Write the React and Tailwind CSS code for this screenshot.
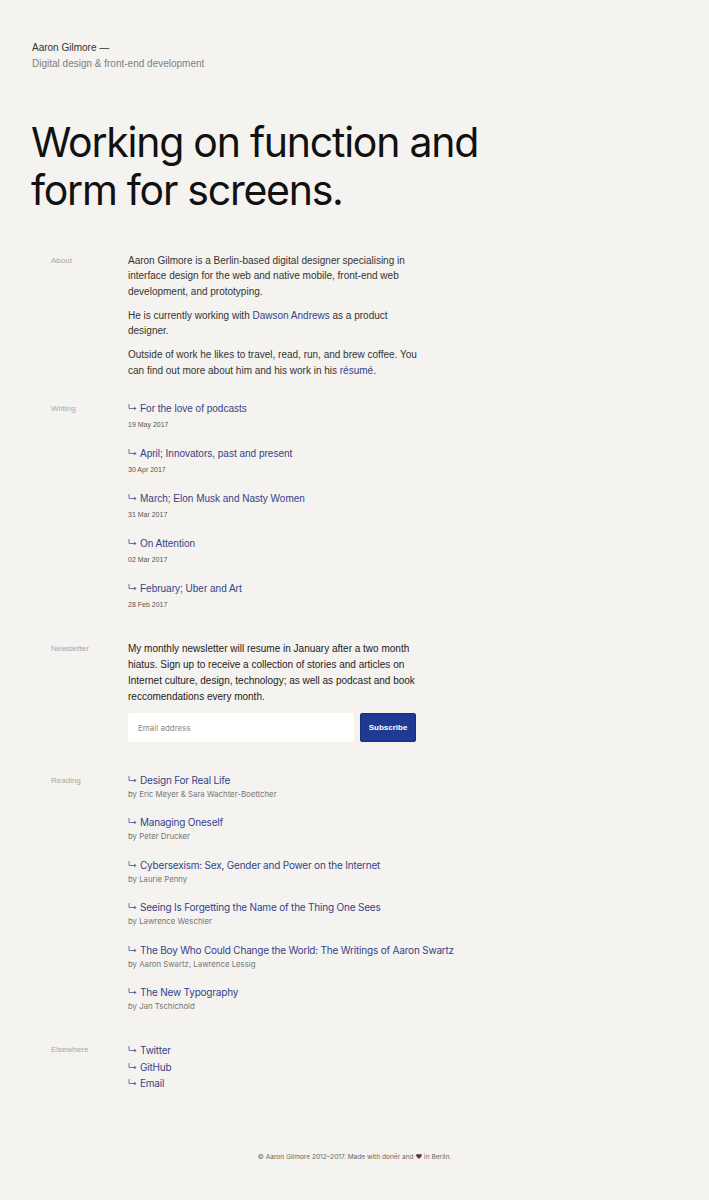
import React from "react";

const helv = { fontFamily: '"Liberation Sans", Arial, sans-serif' };
const inter = { fontFamily: 'Inter, "Liberation Sans", sans-serif' };

function Arrow() {
  return (
    <svg width="9" height="7" viewBox="0 0 9 7" className="inline-block mr-[3px] align-[1px] text-[#5a65a0]" fill="none">
      <path d="M1 0 V4.5 H7" stroke="currentColor" strokeWidth="0.9" />
      <path d="M6 2.7 L8.6 4.5 L6 6.3 Z" fill="currentColor" />
    </svg>
  );
}

function Section({ label, children, className = "" }) {
  return (
    <section className={"flex ml-[51px] " + className}>
      <div className="w-[77px] shrink-0 text-[8px] leading-[15px] text-[#a8a8a4]" style={helv}>{label}</div>
      <div className="w-[290px]">{children}</div>
    </section>
  );
}

const writing = [
  ["For the love of podcasts", "19 May 2017"],
  ["April; Innovators, past and present", "30 Apr 2017"],
  ["March; Elon Musk and Nasty Women", "31 Mar 2017"],
  ["On Attention", "02 Mar 2017"],
  ["February; Uber and Art", "28 Feb 2017"],
];

const reading = [
  ["Design For Real Life", "by Eric Meyer & Sara Wachter-Boettcher"],
  ["Managing Oneself", "by Peter Drucker"],
  ["Cybersexism: Sex, Gender and Power on the Internet", "by Laurie Penny"],
  ["Seeing Is Forgetting the Name of the Thing One Sees", "by Lawrence Weschler"],
  ["The Boy Who Could Change the World: The Writings of Aaron Swartz", "by Aaron Swartz, Lawrence Lessig"],
  ["The New Typography", "by Jan Tschichold"],
];

export default function App() {
  return (
    <div className="min-h-[1200px] bg-[#f4f3ef] text-[#222] pt-[40px] pb-[36px]">
      <header className="ml-[32px] text-[10px] leading-[16px]" style={helv}>
        <div className="text-[#333]">Aaron Gilmore —</div>
        <div className="text-[#808080]">Digital design &amp; front-end development</div>
      </header>

      <h1 className="ml-[31px] mt-[46px] text-[41px] leading-[48px] text-[#111] tracking-[-1.25px]" style={inter}>
        Working on function and<br />form for screens.
      </h1>

      <Section label="About" className="mt-[39px]">
        <div className="text-[10px] leading-[15.3px] text-[#333] space-y-[9px]" style={helv}>
          <p>Aaron Gilmore is a Berlin-based digital designer specialising in interface design for the web and native mobile, front-end web development, and prototyping.</p>
          <p>He is currently working with <span className="text-[#34428a]">Dawson Andrews</span> as a product designer.</p>
          <p>Outside of work he likes to travel, read, run, and brew coffee. You can find out more about him and his work in his <span className="text-[#34428a]">résumé</span>.</p>
        </div>
      </Section>

      <Section label="Writing" className="mt-[23px]">
        <div className="flex flex-col gap-[15px]" style={helv}>
          {writing.map(([t, d]) => (
            <div key={t}>
              <div className="text-[10px] leading-[15px] text-[#34428a]"><Arrow />{t}</div>
              <div className="mt-[2px] text-[7px] leading-[13px] text-[#555]">{d}</div>
            </div>
          ))}
        </div>
      </Section>

      <Section label="Newsletter" className="mt-[30px]">
        <p className="text-[10px] leading-[16px] text-[#222]" style={helv}>
          My monthly newsletter will resume in January after a two month hiatus. Sign up to receive a collection of stories and articles on Internet culture, design, technology; as well as podcast and book reccomendations every month.
        </p>
        <div className="mt-[8px] flex gap-[6px]">
          <div className="w-[226px] h-[29px] bg-white rounded-[2px] flex items-center pl-[10px] text-[8px] text-[#8a8a8a]" style={inter}>Email address</div>
          <button className="w-[56px] h-[29px] bg-[#1f3a93] border border-[#1a3182] rounded-[2px] text-white text-[8px] font-bold" style={helv}>Subscribe</button>
        </div>
      </Section>

      <Section label="Reading" className="mt-[31px]">
        <div className="flex flex-col gap-[14.4px]" style={inter}>
          {reading.map(([t, a]) => (
            <div key={t} className="whitespace-nowrap">
              <div className="text-[10px] leading-[15px] tracking-[-0.2px] text-[#34428a]"><Arrow />{t}</div>
              <div className="text-[7.8px] leading-[13px] text-[#777]">{a}</div>
            </div>
          ))}
        </div>
      </Section>

      <Section label="Elsewhere" className="mt-[29px]">
        <div className="flex flex-col text-[10px] leading-[16.7px] tracking-[-0.2px] text-[#34428a]" style={inter}>
          <div><Arrow />Twitter</div>
          <div><Arrow />GitHub</div>
          <div><Arrow />Email</div>
        </div>
      </Section>

      <footer className="mt-[61px] text-center text-[6.6px] text-[#666]" style={inter}>
        © Aaron Gilmore 2012–2017. Made with donër and <span className="text-[#444]">♥</span> in Berlin.
      </footer>
    </div>
  );
}
